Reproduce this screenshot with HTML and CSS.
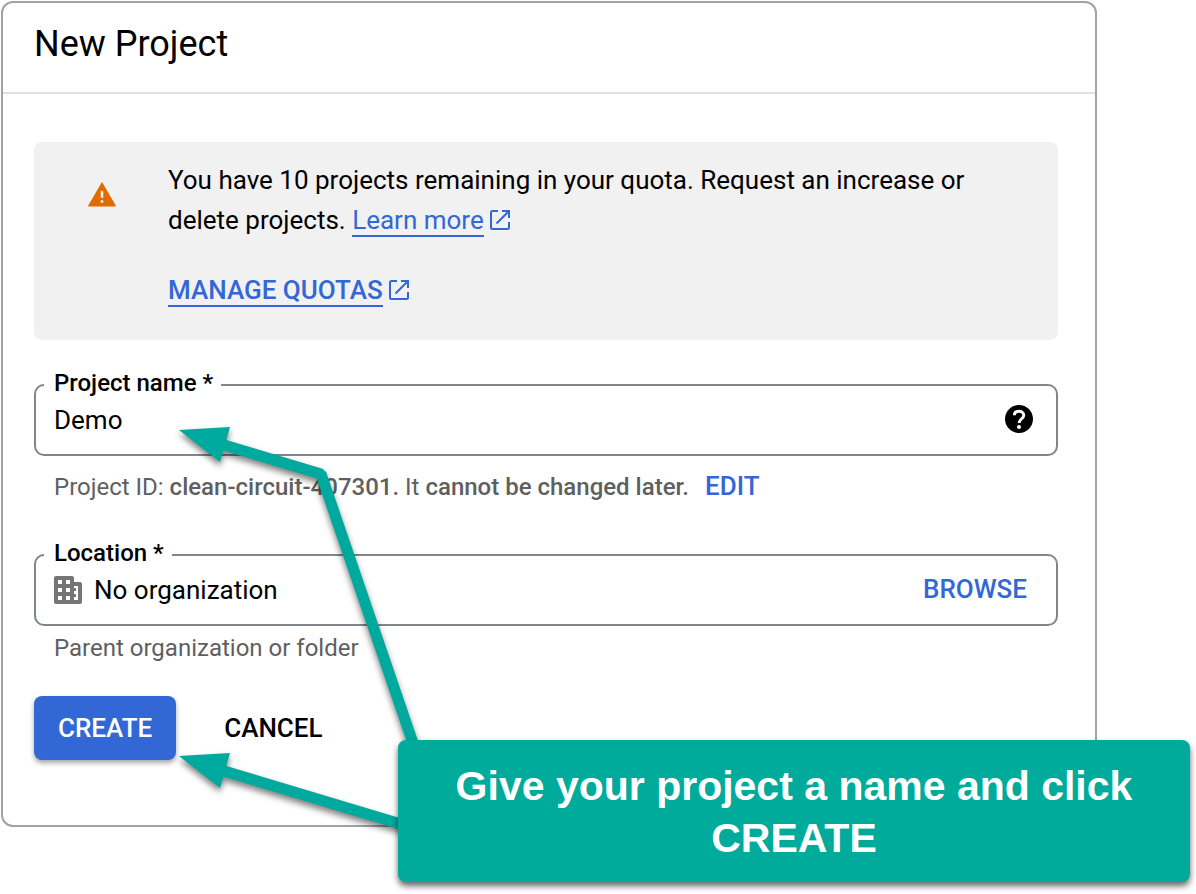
FILE: index.html
```html
<!DOCTYPE html>
<html lang="en">
<head>
    <meta charset="utf-8"/>
    <meta name="viewport" content="width=device-width,initial-scale=1">
    <title>New Project</title>
    <link rel="stylesheet" href="styles.css">
</head>
<body>
<div class="panel">
    <header class="panel-head">
        <h1>New Project</h1>
    </header>
    <form class="panel-body">
        <div class="notice">
            <svg class="warn" viewBox="1 3 22 19"><path d="M1.4 22h21.2c.4 0 .5-.4.3-.7L12.4 3.3c-.2-.4-.6-.4-.8 0L1.1 21.3c-.2.3-.1.7.3.7z" fill="#e06c00"/><path d="M11 10h2v5h-2zM11 17h2v2h-2z" fill="#f1f1f1"/></svg>
            <div class="notice-text">
                <p>You have 10 projects remaining in your quota. Request an increase or delete projects. <a href="#">Learn more</a><svg class="ext" viewBox="0 0 20 20"><path d="M8 1H2.500Q1 1 1 2.500V17.500Q1 19 2.500 19H17.500Q19 19 19 17.500V12M12 1H19V8M19 1L6.500 13.500"/></svg></p>
                <p class="manage"><a href="#">MANAGE QUOTAS</a><svg class="ext" viewBox="0 0 20 20"><path d="M8 1H2.500Q1 1 1 2.500V17.500Q1 19 2.500 19H17.500Q19 19 19 17.500V12M12 1H19V8M19 1L6.500 13.500"/></svg></p>
            </div>
        </div>

        <fieldset class="field">
            <legend><label for="name">Project name *</label></legend>
            <div class="row">
                <input type="text" id="name" value="Demo">
                <button type="button" class="help" aria-label="Help">
                    <svg viewBox="2 2 20 20"><path d="M12 2C6.480 2 2 6.480 2 12s4.480 10 10 10 10-4.480 10-10S17.520 2 12 2z"/><path d="M8.700 9.300C8.700 7.300 10.200 6.400 12 6.400s3.400 1.100 3.400 3c0 2.500-3.300 2.700-3.300 5.400" fill="none" stroke="#fff" stroke-width="2.100"/><circle cx="12" cy="17.700" r="1.450" fill="#fff"/></svg>
                </button>
            </div>
        </fieldset>
        <p class="hint hint-id">Project ID: <b>clean-circuit-407301.</b> It <b>cannot be changed later.</b><button type="button" class="link edit">EDIT</button></p>

        <fieldset class="field">
            <legend><label for="location">Location *</label></legend>
            <div class="row">
                <svg class="org" viewBox="0 0 28 28"><path fill-rule="evenodd" d="M2 0h16q2 0 2 2v4h6q2 0 2 2v18q0 2-2 2H2q-2 0-2-2V2q0-2 2-2zM4 4v4h4V4zM12 4v4h4V4zM4 12v4h4v-4zM12 12v4h4v-4zM4 20v4h4v-4zM12 20v4h4v-4zM20 10v14h4V10z"/><path d="M20 12h2v3h-2zM20 18h2v3h-2z"/></svg>
                <input type="text" id="location" value="No organization" readonly>
                <button type="button" class="link browse">BROWSE</button>
            </div>
        </fieldset>
        <p class="hint">Parent organization or folder</p>

        <div class="actions">
            <button type="submit" class="btn create">CREATE</button>
            <button type="button" class="btn cancel">CANCEL</button>
        </div>
    </form>
</div>

<!-- arrows and callout lie over the form -->
<svg class="arrows" width="440" height="860" viewBox="0 0 440 860">
    <g class="arrow">
        <path d="M224 445L321 474L414 746" class="shaft"/>
        <path d="M179 430L230 427L220 462z"/>
    </g>
    <g class="arrow">
        <path d="M224 771L404 825" class="shaft"/>
        <path d="M179 756L230 753L220 788z"/>
    </g>
</svg>
<div class="callout">Give your project a name and click CREATE</div>
</body>
</html>
```
FILE: styles.css
```css
*{box-sizing:border-box;}
body{margin:0;padding-top:1px;min-height:100vh;background:#fff;color:#000;font:26px/40px Roboto,"Liberation Sans",sans-serif;position:relative;}
h1,p{margin:0;font-weight:400;}
a{color:#3367d6;text-decoration:none;border-bottom:2px solid #3367d6;}
button,input{font:inherit;color:inherit;border:0;background:none;padding:0;margin:0;}
button{cursor:pointer;}

.panel{margin:0 99px 0 1px;border:2px solid #a2a2a2;border-radius:12px;}
.panel-head{padding:17px 31px 24px;border-bottom:2px solid #e0e0e0;}
.panel-head h1{font-size:36px;line-height:48px;}
.panel-body{padding:48px 37px 65px 31px;}

.notice{display:flex;background:#f1f1f1;border-radius:8px;padding:18px 54px 30px;}
.warn{flex:none;width:28px;height:25px;margin:22px 52px 0 0;}
.manage{margin-top:30px;font-weight:500;}
.ext{width:20px;height:20px;margin-left:6px;vertical-align:-1px;fill:none;stroke:#3367d6;stroke-width:2;}

.field{margin:31px 0 0;padding:0 23px 13px 8px;border:2px solid #80868b;border-radius:10px;min-width:0;}
.field legend{padding:0 8px 4px 10px;font-size:24px;line-height:24px;font-weight:500;}
.row{display:flex;align-items:center;height:42px;padding-left:10px;}
.row input{flex:1;min-width:0;height:40px;outline:0;}
.help{flex:none;width:28px;height:28px;margin-bottom:2px;}
.help svg{display:block;}
.org{flex:none;width:28px;height:28px;margin-right:12px;fill:#757575;}
.link{color:#3367d6;font-size:26px;font-weight:500;}
.browse{margin:0 6px 2px 0;}
.edit{margin-left:16px;line-height:32px;}

.hint{margin:6px 20px 0;font-size:24px;line-height:32px;color:#5f5f5f;}
.hint b{font-weight:500;}
.hint-id{margin-top:14px;margin-bottom:38px;}
.hint-id + .field{margin-top:0;}

.actions{display:flex;gap:24px;margin-top:32px;}
.btn{height:64px;padding:0 24px;border-radius:8px;font-weight:500;}
.create{background:#3367d6;color:#fff;box-shadow:0 3px 5px rgba(0,0,0,.35);}

.arrows{position:absolute;left:0;top:0;pointer-events:none;}
.arrow{fill:#00a99d;filter:drop-shadow(0 4px 3px rgba(0,0,0,.5));}
.shaft{fill:none;stroke:#00a99d;stroke-width:11;stroke-linejoin:bevel;}
.callout{position:absolute;left:398px;right:6px;top:740px;padding:20px 40px 18px;border-radius:8px;background:#00ab9c;color:#fff;font:bold 41px/52px "Liberation Sans",sans-serif;text-align:center;box-shadow:0 4px 6px rgba(0,0,0,.6);}
```
